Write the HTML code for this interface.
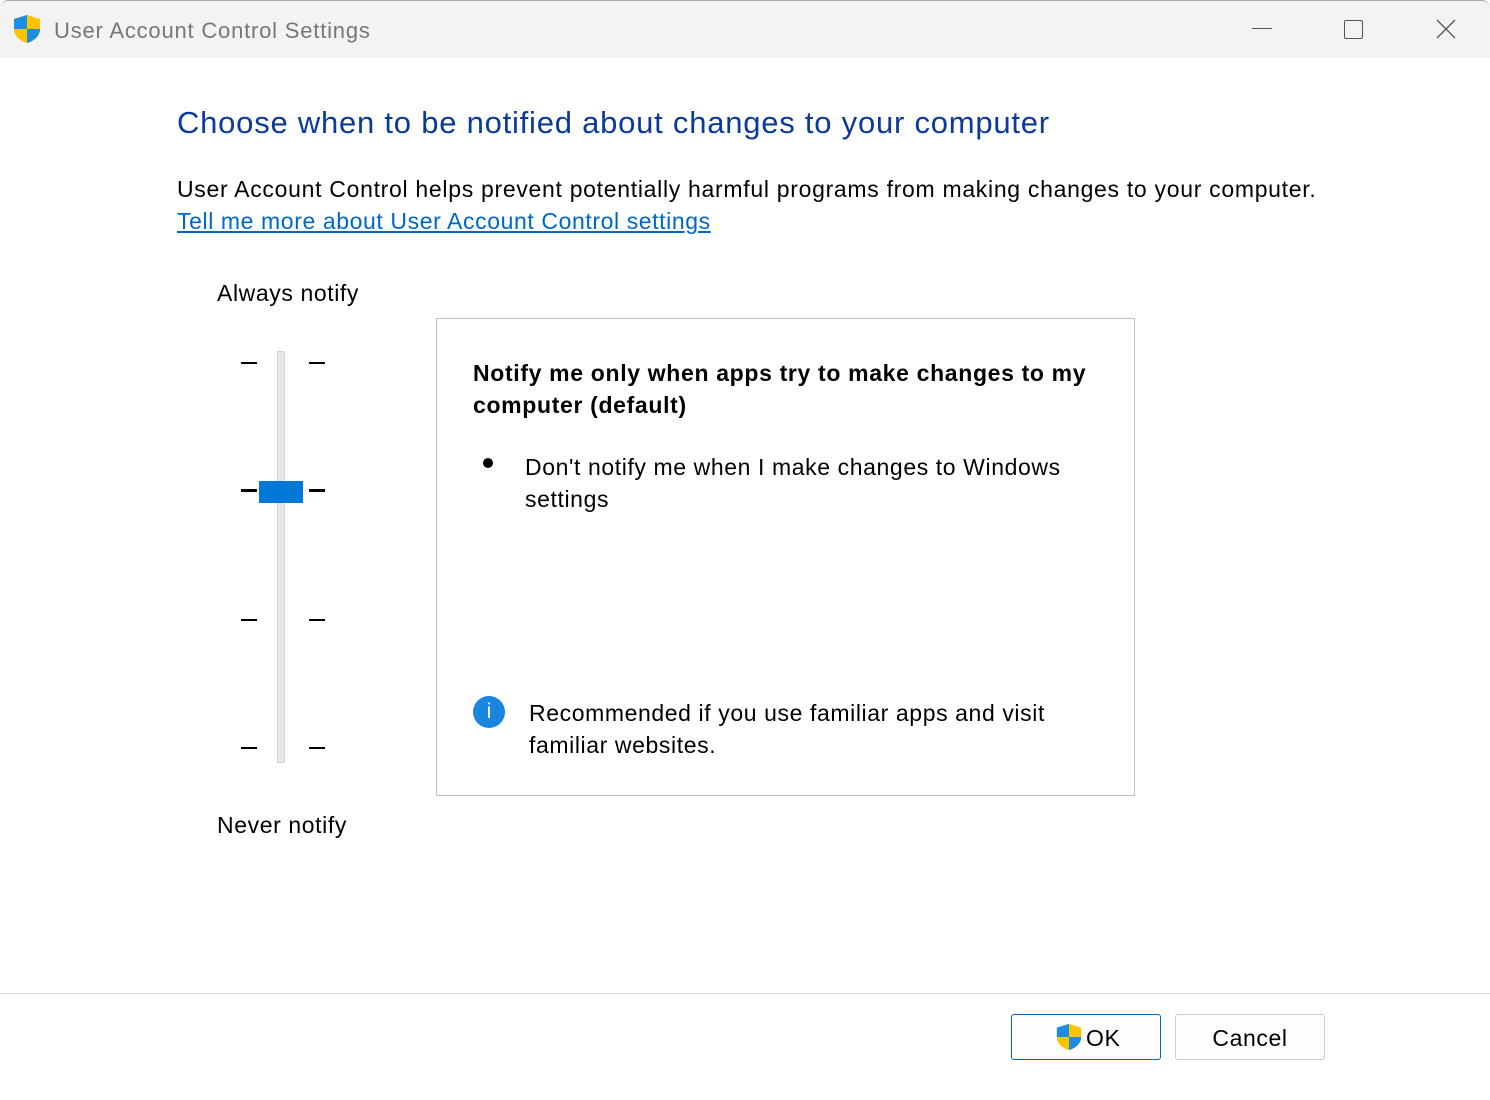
<!DOCTYPE html>
<html><head><style>
body{margin:0;width:1490px;height:1100px;background:#fff;font-family:"Liberation Sans",sans-serif;position:relative;overflow:hidden;color:#000;letter-spacing:0.6px}
.a{position:absolute;white-space:nowrap}
.tb{position:absolute;left:0;top:0;width:1490px;height:58px;background:#f3f3f3;border-top:1px solid #aaa;border-radius:8px 8px 0 0;box-sizing:border-box}
.tick{position:absolute;height:2px;width:16px;background:#000}
</style></head><body>
<div class="tb"></div>
<svg class="a" style="left:12px;top:14px" width="30" height="30" viewBox="0 0 30 30"><path d="M15 1 L28 5 V15 C28 22 22 27 15 29 C8 27 2 22 2 15 V5 Z" fill="#ffc400"/><path d="M15 1 L2 5 V15 H15 Z" fill="#1a8ee0"/><path d="M15 15 H28 C28 22 22 27 15 29 Z" fill="#1a8ee0"/></svg>
<div class="a" style="left:54px;top:18px;font-size:22px;color:#777;letter-spacing:0.8px">User Account Control Settings</div>
<div class="a" style="left:1252px;top:28px;width:20px;height:1px;background:#555"></div>
<div class="a" style="left:1344px;top:20px;width:17px;height:17px;border:1px solid #555;border-radius:2px"></div>
<svg class="a" style="left:1436px;top:19px" width="20" height="20"><path d="M1 1L19 19M19 1L1 19" stroke="#555" stroke-width="1.3"/></svg>
<div class="a" style="left:177px;top:105px;font-size:31px;color:#0a3a9c;letter-spacing:0.77px">Choose when to be notified about changes to your computer</div>
<div class="a" style="left:177px;top:176px;font-size:23px;letter-spacing:0.7px">User Account Control helps prevent potentially harmful programs from making changes to your computer.</div>
<div class="a" style="left:177px;top:208px;font-size:23px;color:#0066cc;text-decoration:underline">Tell me more about User Account Control settings</div>
<div class="a" style="left:217px;top:280px;font-size:23px">Always notify</div>
<div class="a" style="left:217px;top:812px;font-size:23px">Never notify</div>
<div class="a" style="left:277px;top:351px;width:6px;height:410px;background:#e5e7e8;border:1px solid #d4d4d4"></div>
<div class="tick" style="left:241px;top:362px"></div><div class="tick" style="left:309px;top:362px"></div>
<div class="tick" style="left:241px;top:489px;height:3px"></div><div class="tick" style="left:309px;top:489px;height:3px"></div>
<div class="tick" style="left:241px;top:619px"></div><div class="tick" style="left:309px;top:619px"></div>
<div class="tick" style="left:241px;top:747px"></div><div class="tick" style="left:309px;top:747px"></div>
<div class="a" style="left:259px;top:481px;width:44px;height:22px;background:#0078d7"></div>
<div class="a" style="left:436px;top:318px;width:697px;height:476px;border:1px solid #bfbfbf"></div>
<div class="a" style="left:473px;top:357px;font-size:23px;font-weight:bold;line-height:32px;white-space:normal;width:650px;letter-spacing:0.66px">Notify me only when apps try to make changes to my computer (default)</div>
<div class="a" style="left:483px;top:458px;width:10px;height:10px;border-radius:50%;background:#000"></div>
<div class="a" style="left:525px;top:451px;font-size:23px;line-height:32px;white-space:normal;width:570px">Don't notify me when I make changes to Windows settings</div>
<div class="a" style="left:473px;top:696px;width:32px;height:32px;border-radius:50%;background:#1a86e0;color:#fff;font-size:21px;text-align:center;line-height:32px;letter-spacing:0">i</div>
<div class="a" style="left:529px;top:697px;font-size:23px;line-height:32px;white-space:normal;width:550px">Recommended if you use familiar apps and visit familiar websites.</div>
<div class="a" style="left:0;top:993px;width:1490px;height:1px;background:#dcdcdc"></div>
<div class="a" style="left:1011px;top:1014px;width:148px;height:44px;border:1px solid #0067c0;border-radius:3px;background:#fdfdfd"></div>
<svg class="a" style="left:1055px;top:1023px" width="28" height="28" viewBox="0 0 30 30"><path d="M15 1 L28 5 V15 C28 22 22 27 15 29 C8 27 2 22 2 15 V5 Z" fill="#ffc400"/><path d="M15 1 L2 5 V15 H15 Z" fill="#1a8ee0"/><path d="M15 15 H28 C28 22 22 27 15 29 Z" fill="#1a8ee0"/></svg>
<div class="a" style="left:1086px;top:1025px;font-size:23px">OK</div>
<div class="a" style="left:1175px;top:1014px;width:148px;height:44px;border:1px solid #ccc;border-radius:3px;background:#fdfdfd;text-align:center;line-height:46px;font-size:23px">Cancel</div>
</body></html>
